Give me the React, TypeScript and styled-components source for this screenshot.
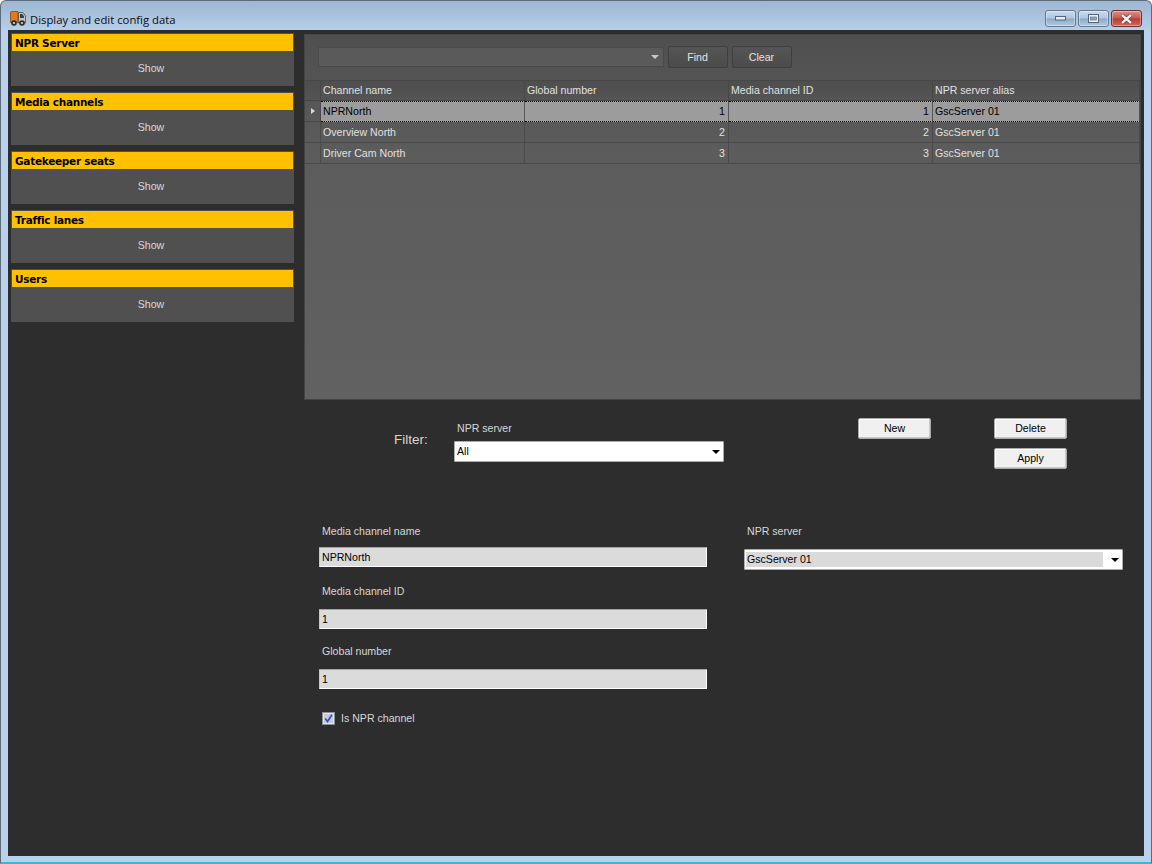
import React from 'react'
import styled, { createGlobalStyle } from 'styled-components'

const GlobalStyle = createGlobalStyle`
  html, body {
    margin: 0;
    padding: 0;
    background: #fff;
  }
  body {
    font-family: "Liberation Sans", sans-serif;
  }
`

const uiFont = `"Liberation Sans", sans-serif`

const Window = styled.div`
  position: relative;
  box-sizing: border-box;
  width: 1152px;
  height: 864px;
  padding: 29px 7px 6px;
  background: linear-gradient(180deg, #9cb7d3 0, #b9d1ea 32px, #b9d1ea 100%);
  border: 1px solid #5e6b78;
  border-bottom: 2px solid #1fc4dc;
  border-radius: 6px 6px 0 0;
`

const TitleIcon = styled.svg`
  position: absolute;
  left: 8px;
  top: 9px;
`

const Title = styled.div`
  position: absolute;
  left: 29px;
  top: 10px;
  font: 11.3px/17px "Open Sans", "Noto Sans", sans-serif;
  color: #0c0c0c;
`

const Controls = styled.div`
  position: absolute;
  top: 9px;
  right: 9px;
  display: flex;
  gap: 2px;
`

const CtlButton = styled.div<{ $close?: boolean }>`
  box-sizing: border-box;
  width: 31px;
  height: 17px;
  display: flex;
  align-items: center;
  justify-content: center;
  border: 1px solid ${({ $close }) => ($close ? '#6b2f33' : '#66788e')};
  border-radius: 3px;
  background: ${({ $close }) =>
    $close
      ? 'linear-gradient(180deg, #dc9088 0, #c9574c 48%, #b73c30 52%, #c96a5c 100%)'
      : 'linear-gradient(180deg, #cadcef 0, #afc6de 48%, #8ba9c8 52%, #b3cbe2 100%)'};
  box-shadow: inset 0 0 0 1px rgba(255, 255, 255, 0.35);
`

const Content = styled.div`
  position: relative;
  width: 1136px;
  height: 826px;
  background: #2d2d2d;
  overflow: hidden;
`

const Sidebar = styled.div`
  position: absolute;
  left: 3px;
  top: 3px;
  width: 283px;
  display: flex;
  flex-direction: column;
  gap: 6px;
`

const Section = styled.div`
  box-sizing: border-box;
  height: 53px;
  padding: 1px 1px 0;
  background: #505050;
  display: flex;
  flex-direction: column;
`

const SectionHead = styled.div`
  height: 17px;
  padding-left: 3px;
  background: #ffc000;
  color: #000;
  font: 700 10.5px/19px "DejaVu Sans", sans-serif;
  letter-spacing: -0.28px;
`

const SectionShow = styled.div`
  flex: 1;
  text-align: center;
  padding-top: 10px;
  padding-right: 3px;
  color: #d8d8d8;
  font: 10.6px/14px ${uiFont};
`

const GridPanel = styled.div`
  position: absolute;
  left: 296px;
  top: 4px;
  width: 837px;
  height: 366px;
  box-sizing: border-box;
  border: 1px solid #444;
  background: linear-gradient(180deg, #4f4f4f 0, #5c5c5c 32%, #616161 100%);
`

const SearchBar = styled.div`
  display: flex;
  gap: 4px;
  height: 45px;
  padding: 12px 0 0 13px;
  box-sizing: border-box;
`

const SearchCombo = styled.div`
  position: relative;
  box-sizing: border-box;
  width: 346px;
  height: 20px;
  background: #5a5a5a;
  border: 1px solid #4a4a4a;
`

const SearchArrow = styled.div`
  position: absolute;
  right: 4px;
  top: 7px;
  border: 4px solid transparent;
  border-top: 4px solid #c8c8c8;
  border-bottom: 0;
`

const DarkButton = styled.div`
  box-sizing: border-box;
  width: 60px;
  height: 22px;
  margin-top: -1px;
  padding-right: 1px;
  text-align: center;
  color: #e4e4e4;
  font: 10.6px/20px ${uiFont};
  background: linear-gradient(180deg, #555 0, #4b4b4b 100%);
  border: 1px solid #3f3f3f;
  border-radius: 2px;
`

const Table = styled.div`
  display: grid;
  grid-template-columns: 16px 204px 204px 204px 1fr;
  grid-auto-rows: 21px;
  color: #e0e0e0;
  font: 10.6px/20px ${uiFont};
`

const HeadCell = styled.div`
  box-sizing: border-box;
  padding-left: 2px;
  border-top: 1px solid #474747;
  border-right: 1px solid #474747;
  border-bottom: 1px solid #474747;
  background: linear-gradient(180deg, #4e4e4e, #545454);
  color: #e0e0e0;
  white-space: nowrap;
  line-height: 19px;
`

const Cell = styled.div<{ $selected?: boolean; $right?: boolean }>`
  box-sizing: border-box;
  padding: 0 3px 0 2px;
  text-align: ${({ $right }) => ($right ? 'right' : 'left')};
  border-right: 1px solid ${({ $selected }) => ($selected ? '#555' : '#4a4a4a')};
  border-bottom: 1px solid #4a4a4a;
  background: ${({ $selected }) => ($selected ? '#9c9c9c' : 'transparent')};
  color: ${({ $selected }) => ($selected ? '#000' : '#e0e0e0')};
  ${({ $selected }) => ($selected ? 'border-top: 1px dotted #000; border-bottom: 1px dotted #000; line-height: 18px;' : '')}
  white-space: nowrap;
`

const RowHead = styled.div<{ $current?: boolean }>`
  position: relative;
  border-right: 1px solid #4a4a4a;
  border-bottom: 1px solid #4a4a4a;
  ${({ $current }) =>
    $current
      ? `&::after {
          content: '';
          position: absolute;
          left: 6px;
          top: 7px;
          border: 3.5px solid transparent;
          border-left: 4px solid #d8d8d8;
          border-right: 0;
        }`
      : ''}
`

const FilterLabel = styled.div`
  position: absolute;
  left: 386px;
  top: 402px;
  color: #d6d6d6;
  font: 13.5px/16px ${uiFont};
`

const Caption = styled.div<{ $x: number; $y: number }>`
  position: absolute;
  left: ${({ $x }) => $x}px;
  top: ${({ $y }) => $y}px;
  color: #d8d8d8;
  font: 10.6px/14px ${uiFont};
  white-space: nowrap;
`

const Select = styled.div<{ $x: number; $y: number; $w: number }>`
  position: absolute;
  left: ${({ $x }) => $x}px;
  top: ${({ $y }) => $y}px;
  width: ${({ $w }) => $w}px;
  box-sizing: border-box;
  height: 21px;
  padding-left: 2px;
  background: #fff;
  border: 1px solid #ababab;
  border-radius: 1px;
  color: #000;
  font: 10.6px/18px ${uiFont};
`

const SelectArrow = styled.div`
  position: absolute;
  right: 3px;
  top: 8px;
  border: 4px solid transparent;
  border-top: 4px solid #000;
  border-bottom: 0;
`

const SelectValue = styled.div`
  position: absolute;
  left: 1px;
  top: 2px;
  bottom: 2px;
  right: 19px;
  padding-left: 1px;
  background: #dadada;
  line-height: 14px;
`

const LightButton = styled.div<{ $x: number; $y: number }>`
  position: absolute;
  left: ${({ $x }) => $x}px;
  top: ${({ $y }) => $y}px;
  box-sizing: border-box;
  width: 73px;
  height: 21px;
  text-align: center;
  color: #000;
  font: 10.6px/19px ${uiFont};
  background: #f0f0f0;
  border: 1px solid #ababab;
  border-radius: 2px;
  box-shadow: inset -1px -1px 0 #c8c8c8, inset 1px 1px 0 #fff;
`

const TextField = styled.div<{ $y: number }>`
  position: absolute;
  left: 311px;
  top: ${({ $y }) => $y}px;
  box-sizing: border-box;
  width: 388px;
  height: 20px;
  padding-left: 2px;
  background: #dbdbdb;
  border: 1px solid #fff;
  border-top-color: #a5a5a5;
  border-left-color: #c8c8c8;
  border-radius: 1px;
  color: #000;
  font: 10.6px/18px ${uiFont};
`

const CheckRow = styled.div`
  position: absolute;
  left: 314px;
  top: 681px;
  display: flex;
  align-items: center;
  gap: 6px;
  color: #d8d8d8;
  font: 10.6px/14px ${uiFont};
`

const CheckBox = styled.svg`
  display: block;
`

const columns = ['Channel name', 'Global number', 'Media channel ID', 'NPR server alias']

const rows = [
  { name: 'NPRNorth', id: 1 },
  { name: 'Overview North', id: 2 },
  { name: 'Driver Cam North', id: 3 },
]

const sections = ['NPR Server', 'Media channels', 'Gatekeeper seats', 'Traffic lanes', 'Users']

const App = () => {
  return (
    <>
      <GlobalStyle />
      <Window>
        <TitleIcon width="18" height="17" viewBox="0 0 18 17">
          <path d="M1.5 2.5 Q1.5 1.5 2.5 1.5 H9 V12.5 H1.5 Z" fill="#e07a1c" stroke="#8a4510" strokeWidth="0.8" />
          <path d="M9.5 2.5 H14 L16.5 6 V13 H9.5 Z" fill="#c4c4c4" stroke="#4a4a4a" strokeWidth="0.8" />
          <path d="M11 4 H13.4 L15 6.5 V8 H11 Z" fill="#3c3c3c" />
          <circle cx="5" cy="13" r="2.8" fill="#2b2b2b" />
          <circle cx="5" cy="13" r="1.1" fill="#d8d8d8" />
          <circle cx="13" cy="13" r="2.8" fill="#2b2b2b" />
          <circle cx="13" cy="13" r="1.1" fill="#d8d8d8" />
        </TitleIcon>
        <Title>Display and edit config data</Title>
        <Controls>
          <CtlButton>
            <svg width="11" height="5" viewBox="0 0 11 5">
              <rect x="0.5" y="0.5" width="10" height="3.5" fill="#e8eef4" stroke="#55657a" />
            </svg>
          </CtlButton>
          <CtlButton>
            <svg width="11" height="9" viewBox="0 0 11 9">
              <rect x="0.5" y="0.5" width="10" height="8" fill="#e8eef4" stroke="#55657a" />
              <rect x="2.5" y="3" width="6" height="3" fill="#8ba9c8" stroke="#55657a" strokeWidth="0.6" />
            </svg>
          </CtlButton>
          <CtlButton $close>
            <svg width="13" height="10" viewBox="0 0 13 10">
              <path d="M2 1 L11 9 M11 1 L2 9" stroke="#53282a" strokeWidth="3.6" />
              <path d="M2 1 L11 9 M11 1 L2 9" stroke="#eee" strokeWidth="2.4" />
            </svg>
          </CtlButton>
        </Controls>
        <Content>
          <Sidebar>
            {sections.map((s) => (
              <Section key={s}>
                <SectionHead>{s}</SectionHead>
                <SectionShow>Show</SectionShow>
              </Section>
            ))}
          </Sidebar>

          <GridPanel>
            <SearchBar>
              <SearchCombo>
                <SearchArrow />
              </SearchCombo>
              <DarkButton>Find</DarkButton>
              <DarkButton>Clear</DarkButton>
            </SearchBar>
            <Table>
              <HeadCell />
              {columns.map((c) => (
                <HeadCell key={c}>{c}</HeadCell>
              ))}
              {rows.map((r, i) => (
                <React.Fragment key={r.name}>
                  <RowHead $current={i === 0} />
                  <Cell $selected={i === 0}>{r.name}</Cell>
                  <Cell $selected={i === 0} $right>{r.id}</Cell>
                  <Cell $selected={i === 0} $right>{r.id}</Cell>
                  <Cell $selected={i === 0}>GscServer 01</Cell>
                </React.Fragment>
              ))}
            </Table>
          </GridPanel>

          <FilterLabel>Filter:</FilterLabel>
          <Caption $x={449} $y={391}>NPR server</Caption>
          <Select $x={446} $y={411} $w={270}>
            All
            <SelectArrow />
          </Select>

          <LightButton $x={850} $y={388}>New</LightButton>
          <LightButton $x={986} $y={388}>Delete</LightButton>
          <LightButton $x={986} $y={418}>Apply</LightButton>

          <Caption $x={314} $y={494}>Media channel name</Caption>
          <TextField $y={517}>NPRNorth</TextField>
          <Caption $x={314} $y={554}>Media channel ID</Caption>
          <TextField $y={579}>1</TextField>
          <Caption $x={314} $y={614}>Global number</Caption>
          <TextField $y={639}>1</TextField>

          <Caption $x={739} $y={494}>NPR server</Caption>
          <Select $x={736} $y={519} $w={379}>
            <SelectValue>GscServer 01</SelectValue>
            <SelectArrow />
          </Select>

          <CheckRow>
            <CheckBox width="13" height="13" viewBox="0 0 13 13">
              <rect x="0.5" y="0.5" width="12" height="12" fill="#dfe3ec" stroke="#8e8f8f" />
              <rect x="2" y="2" width="9" height="9" fill="#c4cbe0" />
              <path d="M3.2 6.5 L5.5 9.5 L10 2.8" fill="none" stroke="#3c50b4" strokeWidth="1.8" />
            </CheckBox>
            Is NPR channel
          </CheckRow>
        </Content>
      </Window>
    </>
  )
}

export default App
